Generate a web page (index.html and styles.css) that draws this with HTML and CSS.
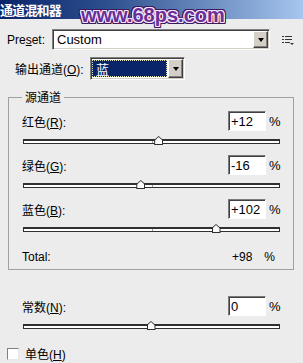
FILE: index.html
```html
<!DOCTYPE html>
<html lang="zh-CN">
<head>
    <meta charset="UTF-8">
    <meta name="viewport" content="width=device-width, initial-scale=1.0">
    <title>通道混和器</title>
    <link rel="stylesheet" href="styles.css">
</head>
<body>
<div class="dialog">
    <div class="title-bar"><span class="title-text">通道混和器</span></div>
    <div class="watermark">www.68ps.com</div>

    <div class="preset-row">
        <span class="preset-label">Pre<u>s</u>et:</span>
        <div class="combo combo-preset">
            <span class="combo-value">Custom</span>
            <span class="combo-button"><span class="arrow"></span></span>
        </div>
        <svg class="menu-icon" width="12" height="11" viewBox="0 0 12 11">
            <rect x="0" y="1" width="2" height="1" fill="#333"/>
            <rect x="3" y="1" width="7" height="1" fill="#333"/>
            <rect x="0" y="4" width="2" height="1" fill="#333"/>
            <rect x="3" y="4" width="7" height="1" fill="#333"/>
            <rect x="0" y="7" width="2" height="1" fill="#333"/>
            <rect x="3" y="7" width="5" height="1" fill="#333"/>
            <polygon points="8,8 12,8 10,10" fill="#333"/>
        </svg>
    </div>

    <div class="output-row">
        <span class="output-label">输出通道(<u>O</u>):</span>
        <div class="combo combo-output">
            <span class="combo-value selected">蓝</span>
            <span class="combo-button"><span class="arrow"></span></span>
        </div>
    </div>

    <fieldset class="source-group">
        <legend>源通道</legend>
        <div class="channel">
            <div class="channel-head">
                <span class="label">红色(<u>R</u>):</span>
                <span class="num-input">+12</span>
                <span class="pct">%</span>
            </div>
            <div class="slider"><span class="tick"></span><span class="thumb" style="left: 53%"></span></div>
        </div>
        <div class="channel">
            <div class="channel-head">
                <span class="label">绿色(<u>G</u>):</span>
                <span class="num-input">-16</span>
                <span class="pct">%</span>
            </div>
            <div class="slider"><span class="tick"></span><span class="thumb" style="left: 46%"></span></div>
        </div>
        <div class="channel">
            <div class="channel-head">
                <span class="label">蓝色(<u>B</u>):</span>
                <span class="num-input">+102</span>
                <span class="pct">%</span>
            </div>
            <div class="slider"><span class="tick"></span><span class="thumb" style="left: 75.5%"></span></div>
        </div>
        <div class="total-row">
            <span class="total-label">Total:</span>
            <span class="total-value">+98</span>
            <span class="total-pct">%</span>
        </div>
    </fieldset>

    <div class="channel constant">
        <div class="channel-head">
            <span class="label">常数(<u>N</u>):</span>
            <span class="num-input">0</span>
            <span class="pct">%</span>
        </div>
        <div class="slider"><span class="tick"></span><span class="thumb" style="left: 50%"></span></div>
    </div>

    <div class="mono-row">
        <span class="checkbox"></span>
        <span class="label">单色(<u>H</u>)</span>
    </div>
</div>
</body>
</html>
```

FILE: styles.css
```css
body {
    margin: 0;
    background-color: #ececec;
    font-family: "Liberation Sans", "Noto Sans CJK SC", sans-serif;
    font-size: 12px;
    color: #000;
}
.dialog {
    position: relative;
    width: 303px;
    height: 363px;
    overflow: hidden;
}
.title-bar {
    height: 19px;
    background: linear-gradient(to right, #0a246a 0%, #2c4f8e 35%, #a6c6ee 100%);
    display: flex;
    align-items: center;
}
.title-text {
    color: #fff;
    font-family: "Noto Sans CJK SC", sans-serif;
    font-weight: bold;
    font-size: 13px;
    line-height: 15px;
    margin-left: 0;
    letter-spacing: -0.8px;
}
.watermark {
    position: absolute;
    left: 81px;
    top: 3px;
    font-family: "Liberation Sans", sans-serif;
    font-weight: bold;
    font-size: 20px;
    line-height: 24px;
    color: #6a2f96;
    text-shadow:
        1px 0 0 #f2e8ff, -1px 0 0 #f2e8ff, 0 1px 0 #f2e8ff, 0 -1px 0 #f2e8ff,
        1px 1px 0 #f2e8ff, -1px -1px 0 #f2e8ff, 1px -1px 0 #f2e8ff, -1px 1px 0 #f2e8ff,
        2px 0 0 #3e1760, -2px 0 0 #3e1760, 0 2px 0 #3e1760, 0 -2px 0 #3e1760,
        2px 2px 0 #3e1760, -2px -2px 0 #3e1760, 2px -2px 0 #3e1760, -2px 2px 0 #3e1760,
        2px 1px 0 #3e1760, -2px 1px 0 #3e1760, 1px 2px 0 #3e1760, 1px -2px 0 #3e1760,
        2px -1px 0 #3e1760, -2px -1px 0 #3e1760, -1px 2px 0 #3e1760, -1px -2px 0 #3e1760;
}

/* combo boxes */
.preset-row {
    display: flex;
    align-items: center;
    margin-top: 10px;
    padding-left: 7px;
}
.preset-label {
    width: 45px;
}
.output-row {
    display: flex;
    align-items: center;
    margin-top: 7px;
    padding-left: 15px;
}
.output-label {
    width: 75px;
}
.combo {
    display: flex;
    box-sizing: border-box;
    background-color: #fff;
    border: 1px solid;
    border-color: #808080 #fff #fff #808080;
    box-shadow: inset 1px 1px 0 #404040, inset -1px -1px 0 #d4d0c8;
    padding: 1px;
}
.combo-preset {
    width: 218px;
    height: 21px;
}
.combo-output {
    width: 95px;
    height: 23px;
}
.combo-value {
    flex: 1;
    display: flex;
    align-items: center;
    padding-left: 3px;
    font-size: 13px;
}
.combo-value.selected {
    margin: 1px 1px 1px 0;
    padding-left: 3px;
    background-color: #0a246a;
    color: #fff;
    border: 1px dotted #e4e4b0;
    font-family: "Noto Sans CJK SC", sans-serif;
    font-size: 13px;
}
.combo-button {
    width: 15px;
    box-sizing: border-box;
    display: flex;
    align-items: center;
    justify-content: center;
    background-color: #d4d0c8;
    border: 1px solid;
    border-color: #fff #404040 #404040 #fff;
    box-shadow: inset -1px -1px 0 #808080;
}
.arrow {
    width: 0;
    height: 0;
    border-left: 3px solid transparent;
    border-right: 3px solid transparent;
    border-top: 4px solid #000;
    margin-top: 1px;
}
.menu-icon {
    margin-left: 12px;
    margin-top: 1px;
}

/* source group */
.source-group {
    margin: 10px 9px 0 8px;
    padding: 7px 13px 5px 13px;
    border: 1px solid #a0a0a0;
    min-width: 0;
}
.source-group legend {
    padding: 0 3px;
    font-family: "Noto Sans CJK SC", sans-serif;
    font-size: 12px;
    line-height: 14px;
}
.channel {
    margin-bottom: 11px;
}
.channel-head {
    display: flex;
    align-items: center;
    height: 20px;
}
.label {
    flex: 1;
}
.num-input {
    box-sizing: border-box;
    width: 38px;
    height: 20px;
    background-color: #fff;
    border: 1px solid;
    border-color: #7a7a7a #fff #fff #7a7a7a;
    box-shadow: inset 1px 1px 0 #404040;
    padding-left: 2px;
    font-size: 13px;
    line-height: 19px;
}
.pct {
    width: 11px;
    margin-left: 3px;
    font-size: 13px;
}
.slider {
    position: relative;
    margin-top: 8px;
    margin-left: 1px;
    height: 2px;
    background-color: #fff;
    border: 1px solid #303030;
    border-top-width: 2px;
}
.tick {
    position: absolute;
    left: 50%;
    top: 0;
    width: 1px;
    height: 2px;
    background-color: #a0a0a0;
}
.thumb {
    position: absolute;
    top: -5px;
    width: 9px;
    height: 9px;
    margin-left: -5px;
    background-color: #303030;
    clip-path: polygon(50% 0, 100% 45%, 100% 100%, 0 100%, 0 45%);
}
.thumb::after {
    content: "";
    position: absolute;
    left: 1px;
    top: 1px;
    width: 7px;
    height: 7px;
    background-color: #fafafa;
    clip-path: polygon(50% 0, 100% 45%, 100% 100%, 0 100%, 0 45%);
}
.total-row {
    display: flex;
    align-items: center;
    margin-top: 18px;
    height: 14px;
    padding-right: 5px;
}
.total-label {
    flex: 1;
}
.total-pct {
    margin-left: 12px;
}

/* constant + monochrome */
.constant {
    margin-top: 26px;
    padding: 0 23px 0 22px;
}
.mono-row {
    display: flex;
    align-items: center;
    margin-top: 16px;
    padding-left: 7px;
}
.checkbox {
    box-sizing: border-box;
    width: 12px;
    height: 12px;
    margin-right: 6px;
    background-color: #fff;
    border: 1px solid;
    border-color: #808080 #e8e8e8 #e8e8e8 #808080;
}
.mono-row .label {
    flex: none;
}
```
